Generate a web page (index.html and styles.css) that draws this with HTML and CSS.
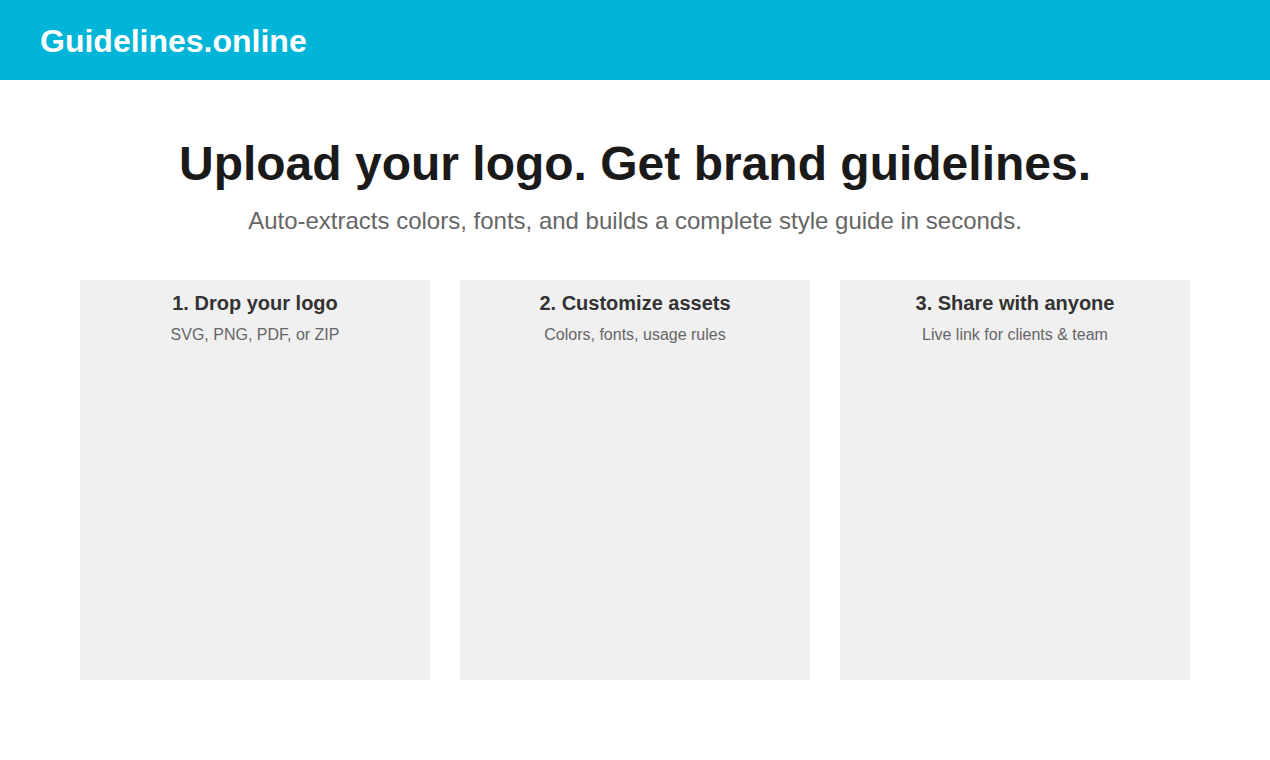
FILE: index.html
```html
<!DOCTYPE html>
<html lang="en">
<head>
<meta charset="utf-8">
<title>Guidelines.online</title>
<link rel="stylesheet" href="styles.css">
</head>
<body>
<header class="topbar">
  <div class="brand">Guidelines.online</div>
</header>
<main class="main">
  <section class="hero">
    <h1 class="hero-title">Upload your logo. Get brand guidelines.</h1>
    <p class="hero-sub">Auto-extracts colors, fonts, and builds a complete style guide in seconds.</p>
  </section>
  <section class="steps">
    <div class="step">
      <h3 class="step-title">1. Drop your logo</h3>
      <p class="step-text">SVG, PNG, PDF, or ZIP</p>
    </div>
    <div class="step">
      <h3 class="step-title">2. Customize assets</h3>
      <p class="step-text">Colors, fonts, usage rules</p>
    </div>
    <div class="step">
      <h3 class="step-title">3. Share with anyone</h3>
      <p class="step-text">Live link for clients &amp; team</p>
    </div>
  </section>
</main>
</body>
</html>
```

FILE: styles.css
```css
* { box-sizing: border-box; }
html, body { margin: 0; padding: 0; }
body {
  font-family: "Liberation Sans", Arial, sans-serif;
  background: #ffffff;
  color: #1a1a1a;
}
.topbar {
  height: 80px;
  background: #00b5d8;
  display: flex;
  align-items: center;
  padding: 2px 40px 0;
}
.brand {
  color: #ffffff;
  font-weight: 700;
  font-size: 32px;
  line-height: 1;
}
.main {
  padding: 0 80px;
}
.hero {
  text-align: center;
  padding-top: 56px;
}
.hero-title {
  margin: 0;
  font-size: 48px;
  font-weight: 700;
  line-height: 56px;
  color: #1a1a1a;
}
.hero-sub {
  margin: 14px 0 0;
  font-size: 24px;
  line-height: 30px;
  color: #666666;
}
.steps {
  margin-top: 44px;
  display: grid;
  grid-template-columns: repeat(3, 1fr);
  gap: 30px;
}
.step {
  height: 400px;
  background: #f0f0f0;
  text-align: center;
  padding-top: 11px;
}
.step-title {
  margin: 0;
  font-size: 20px;
  font-weight: 700;
  line-height: 24px;
  color: #333333;
}
.step-text {
  margin: 11px 0 0;
  font-size: 16px;
  line-height: 18px;
  color: #666666;
}
```
